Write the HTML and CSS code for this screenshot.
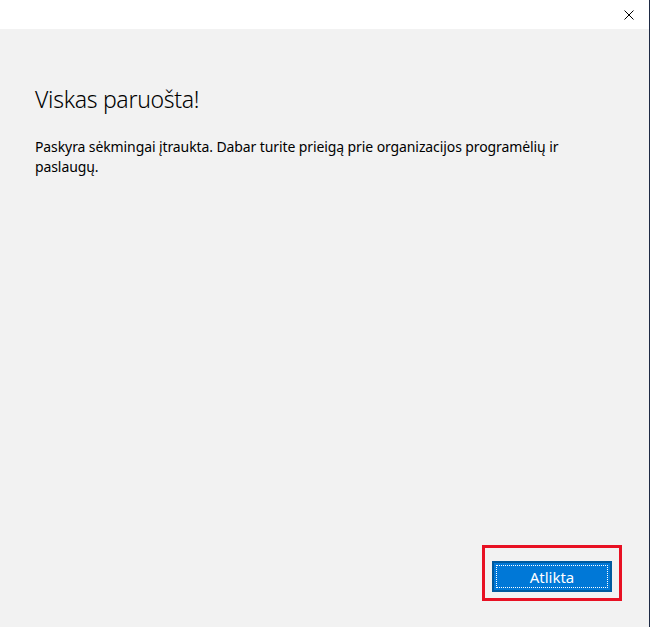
FILE: index.html
```html
<!DOCTYPE html>
<html lang="lt">
<head>
<meta charset="utf-8">
<title>Viskas paruošta!</title>
<link rel="stylesheet" href="styles.css">
</head>
<body>
<div class="window">
  <div class="titlebar">
    <button class="close" aria-label="Uždaryti">
      <svg width="10" height="10" viewBox="0 0 10 10"><path d="M0.5 0.5 L9.5 9.5 M9.5 0.5 L0.5 9.5" stroke="#000" stroke-width="1" fill="none"/></svg>
    </button>
  </div>
  <main class="content">
    <h1 class="title">Viskas paruošta!</h1>
    <p class="message">Paskyra sėkmingai įtraukta. Dabar turite prieigą prie organizacijos programėlių ir paslaugų.</p>
  </main>
  <div class="footer">
    <div class="highlight">
      <button class="primary"><span class="focus">Atlikta</span></button>
    </div>
  </div>
</div>
</body>
</html>
```

FILE: styles.css
```css
* { box-sizing: border-box; }

html, body {
  margin: 0;
  height: 100%;
}

body {
  font-family: "Segoe UI", "Noto Sans", "Open Sans", sans-serif;
  color: #000;
}

.window {
  height: 627px;
  display: flex;
  flex-direction: column;
  background: #f2f2f2;
  border-right: 1px solid #1e2a44;
}

.titlebar {
  height: 29px;
  background: #fff;
  display: flex;
  justify-content: flex-end;
  align-items: flex-start;
}

.close {
  width: 46px;
  height: 29px;
  border: 0;
  padding: 0;
  background: transparent;
  display: flex;
  align-items: center;
  justify-content: center;
}

.close svg { display: block; margin-left: 6px; }

.content {
  flex: 1;
  padding: 0 64px 0 35px;
}

.title {
  margin: 54px 0 0;
  font-weight: 300;
  font-size: 23px;
  letter-spacing: -0.3px;
  line-height: 32px;
  color: #000;
}

.message {
  margin: 22px 0 0;
  font-size: 14px;
  letter-spacing: -0.1px;
  line-height: 20px;
}

.footer {
  display: flex;
  justify-content: flex-end;
  padding: 0 27px 26px 0;
}

.highlight {
  border: 3px solid #e81123;
  padding: 13px 7px 6px 7px;
}

.primary {
  width: 120px;
  height: 31px;
  padding: 2px;
  border: 2px solid #005a9e;
  background: #0078d7;
  color: #fff;
  font-family: inherit;
  font-size: 15px;
  display: flex;
}

.focus {
  flex: 1;
  border: 1px dotted #fff;
  display: flex;
  align-items: center;
  justify-content: center;
}
```
